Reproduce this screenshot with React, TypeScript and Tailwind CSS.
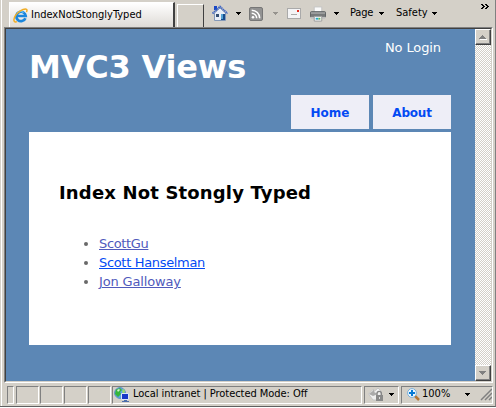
import type { ReactNode } from "react";

const UI = "font-['DejaVu_Sans_Condensed','DejaVu_Sans',sans-serif]";

function Caret({ color = "#000" }: { color?: string }) {
  return (
    <svg width="5" height="3" viewBox="0 0 5 3" shapeRendering="crispEdges" className="shrink-0">
      <path d="M0 0h5v1H4v1H3v1H2V2H1V1H0z" fill={color} />
    </svg>
  );
}

function IeLogo() {
  return (
    <svg width="15" height="15" viewBox="0 0 15 15" className="shrink-0">
      <path d="M12.400 10.200a4.700 4.700 0 1 1 .3-2.200H4" fill="none" stroke="#1a86dc" strokeWidth="2.700" />
      <path d="M4 5.400A4.700 4.700 0 0 1 10.500 4.600" fill="none" stroke="#6fcaf7" strokeWidth="1.200" />
      <path d="M4 13.600C.2 15 .2 11 2.500 7.500 5 4 9.500 1 12.500 1c1.800 0 1.800 1.600.9 3.200" fill="none" stroke="#f0ad25" strokeWidth="1.500" />
    </svg>
  );
}

function HomeIcon() {
  return (
    <svg width="16" height="17" viewBox="0 0 16 17" className="shrink-0">
      <path d="M2 1h3v4H2z" fill="#1947c5" />
      <path d="M2.500 8L8 3l5.500 5v7.500h-11z" fill="#e9eef7" stroke="#8398b8" />
      <path d="M.5 8.500L8 1.500l7.500 7" fill="none" stroke="#4368c4" strokeWidth="1.800" strokeDasharray="1.500 .5" />
      <path d="M9 9h4v6H9z" fill="#174b8c" />
      <path d="M4 9h3v3H4z" fill="#344e72" />
      <path d="M9 9h2v5H9z" fill="#55a3d4" />
    </svg>
  );
}

function FeedIcon() {
  return (
    <svg width="14" height="14" viewBox="0 0 14 14" className="shrink-0">
      <rect x=".5" y=".5" width="13" height="13" rx="1.500" fill="#929292" stroke="#777" />
      <circle cx="4" cy="10.300" r="1.300" fill="#fff" />
      <path d="M2.700 6.300a5 5 0 0 1 5 5M2.700 3.200a8 8 0 0 1 8 8" fill="none" stroke="#fff" strokeWidth="1.500" />
    </svg>
  );
}

function MailIcon() {
  return (
    <svg width="14" height="11" viewBox="0 0 14 11" className="shrink-0">
      <rect x=".5" y=".5" width="13" height="10" fill="#f4f4f6" stroke="#aaa" />
      <path d="M10 2h2v2h-2z" fill="#e32b20" />
      <path d="M4 6.500h6" stroke="#aaa" />
    </svg>
  );
}

function PrinterIcon() {
  return (
    <svg width="16" height="16" viewBox="0 0 17 16" className="shrink-0">
      <path d="M4.500.5h8v6h-8z" fill="#fafafa" stroke="#c4c4c4" />
      <rect x=".5" y="5.500" width="16" height="6" rx="1" fill="#77797a" stroke="#5c6062" />
      <path d="M1 6h15v2H1z" fill="#9a9c9c" />
      <path d="M1 11h15v2H1z" fill="#bfc0c0" />
      <path d="M4.500 10.500h8v5h-8z" fill="#fff" stroke="#999" />
      <path d="M6 12h3v2H6z" fill="#27a4c8" />
      <path d="M9 12h2v2H9z" fill="#65b550" />
    </svg>
  );
}

function ZoneIcon() {
  return (
    <svg width="16" height="16" viewBox="0 0 16 16" className="shrink-0">
      <circle cx="6" cy="6" r="5.400" fill="#5aa5e6" stroke="#5d8fc4" />
      <path d="M2 2.500L6 1l2 2-2 2 1 2-3 3-3-3z" fill="#35b53a" />
      <path d="M9 1.500l2 2.500-1 3-2-2z" fill="#9bdc6b" />
      <path d="M3 3l2-1 1 1-2 2z" fill="#d5f3cf" />
      <path d="M7.500 6.500h7v6h-7z" fill="#1738c8" stroke="#dce4f4" />
      <path d="M10 13h3v1h2v1H8v-1h2z" fill="#4c6dab" />
    </svg>
  );
}

function FilterIcon() {
  return (
    <svg width="16" height="15" viewBox="0 0 16 15" className="shrink-0">
      <path d="M.5 7l5-5v3L10 1l3 3v9H5z" fill="#efefef" stroke="#c4c4c4" />
      <path d="M1 7l5-4v2l4 2-5 2z" fill="#aaa" />
      <path d="M9 8V6.500a2.200 2.200 0 0 1 4.400 0V8" fill="none" stroke="#858585" strokeWidth="1.300" />
      <path d="M8 8h7v6H8z" fill="#898989" />
      <path d="M11 10h1v2h-1z" fill="#ddd" />
    </svg>
  );
}

function ZoomIcon() {
  return (
    <svg width="13" height="13" viewBox="0 0 13 13" className="shrink-0">
      <path d="M7.500 7.500L12 12" stroke="#b77836" strokeWidth="2.500" />
      <circle cx="5" cy="5" r="4.400" fill="#edf8ff" stroke="#7baeda" />
      <path d="M5 2v6M2 5h6" stroke="#087bd5" strokeWidth="2" />
    </svg>
  );
}

function Pane({ className = "", children }: { className?: string; children?: ReactNode }) {
  return (
    <div className={`flex h-[18px] shrink-0 items-center border border-t-[#808080] border-l-[#808080] border-r-white border-b-white ${className}`}>
      {children}
    </div>
  );
}

function ScrollButton({ down = false }: { down?: boolean }) {
  return (
    <div className="flex h-4 w-4 shrink-0 items-center justify-center border border-t-white border-l-white border-r-[#404040] border-b-[#404040] bg-[#d4d0c8] shadow-[inset_-1px_-1px_#808080]">
      <svg width="8" height="5" viewBox="0 0 8 5" shapeRendering="crispEdges">
        {down ? (
          <path d="M0 0h7v1H6v1H5v1H4v1H3V3H2V2H1V1H0z" fill="#808080" />
        ) : (
          <>
            <path d="M1 4h7v1H1z" fill="#fff" />
            <path d="M3 0h1v1h1v1h1v1h1v1H0V3h1V2h1V1h1z" fill="#808080" />
          </>
        )}
      </svg>
    </div>
  );
}

export default function App() {
  return (
    <div className={`h-[408px] w-[496px] overflow-hidden bg-white text-[11px] text-black ${UI}`}>
      <div className="flex h-[407px] border-r border-b border-r-[#808080] border-b-[#606060] bg-[#d4d0c8] pl-px">
        <div className="w-px shrink-0 bg-white" />
        <div className="flex w-[493px] shrink-0 flex-col">
          <div className="flex h-[27px] shrink-0">
            <div className="mt-[2px] ml-[7px] flex h-[25px] w-[166px] items-center border-t border-r-2 border-l border-t-white border-l-white border-r-[#404040] bg-linear-to-b from-white to-[#dedbd6] pl-[3px]">
              <IeLogo />
              <span className="ml-[3px] w-[112px] whitespace-nowrap">IndexNotStonglyTyped</span>
            </div>
            <div className="mt-[4px] ml-[2px] h-[23px] w-[27px] border-t border-r border-l border-t-white border-l-white border-r-[#404040]" />
            <div className="ml-[8px] flex items-center">
              <HomeIcon />
              <span className="ml-[8px]"><Caret /></span>
              <span className="ml-[8px]"><FeedIcon /></span>
              <span className="ml-[10px]"><Caret color="#96938e" /></span>
              <span className="ml-[9px]"><MailIcon /></span>
              <span className="ml-[9px]"><PrinterIcon /></span>
              <span className="ml-[8px]"><Caret /></span>
              <span className="ml-[11px] w-[25px] whitespace-nowrap tracking-[-0.2px]">Page</span>
              <span className="ml-[4px]"><Caret /></span>
              <span className="ml-[12px] w-[33px] whitespace-nowrap">Safety</span>
              <span className="ml-[3px]"><Caret /></span>
            </div>
            <svg className="mt-1 ml-[44px]" width="8" height="5" viewBox="0 0 8 5" shapeRendering="crispEdges">
              <path d="M0 0h2v1h1v1h1v1H3v1H2v1H0V4h1V3h1V2H1V1H0zM4 0h2v1h1v1h1v1H7v1H6v1H4V4h1V3h1V2H5V1H4z" fill="#000" />
            </svg>
          </div>

          <div className="ml-[2px] h-[356px] w-[489px] shrink-0 border border-t-[#808080] border-r-white border-b-white border-l-[#808080]">
            <div className="flex h-[354px] border border-t-[#404040] border-r-[#d4d0c8] border-b-[#d4d0c8] border-l-[#404040]">
              <main className="flex w-[469px] flex-col bg-[#5c87b5] font-['Verdana','DejaVu_Sans',sans-serif]">
                <header className="flex h-[66px] shrink-0 justify-between pr-[34px] pl-[23px] text-white">
                  <h1 className="mt-[18px] w-[218px] text-[32px] leading-[40px] font-bold whitespace-nowrap tracking-[-0.2px]">MVC3 Views</h1>
                  <span className="mt-[10px] text-[13px] leading-[18px] whitespace-nowrap tracking-[-0.1px]">No Login</span>
                </header>
                <nav className="flex h-[34px] shrink-0 gap-1 self-end pr-[24px] text-[12px] font-bold text-[#034af3]">
                  <a className="flex w-[78px] items-center justify-center bg-[#eeeef7] pt-px">Home</a>
                  <a className="flex w-[78px] items-center justify-center bg-[#eeeef7] pt-px tracking-[-0.2px]">About</a>
                </nav>
                <section className="mt-[3px] ml-[23px] h-[213px] w-[422px] bg-white px-[30px] pt-[49px]">
                  <h2 className="text-[18px] leading-[24px] font-bold whitespace-nowrap tracking-[0.16px]">Index Not Stongly Typed</h2>
                  <ul className="mt-[29px] list-disc pl-[40px] text-[13px] leading-[19px] text-[#696969]">
                    <li><a className="tracking-[-0.35px] text-[#505abc] underline">ScottGu</a></li>
                    <li><a className="tracking-[-0.33px] text-[#034af3] underline">Scott Hanselman</a></li>
                    <li><a className="tracking-[-0.15px] text-[#505abc] underline">Jon Galloway</a></li>
                  </ul>
                </section>
              </main>
              <div className="flex w-4 flex-col justify-between bg-[repeating-conic-gradient(#d4d0c8_0_25%,#fff_0_50%)] bg-size-[2px_2px]">
                <ScrollButton />
                <ScrollButton down />
              </div>
            </div>
          </div>

          <footer className="flex h-[23px] shrink-0 items-center pl-[5px]">
            <Pane className="w-[7px]" />
            <Pane className="ml-[2px] w-[23px]" />
            <Pane className="ml-px w-[23px]" />
            <Pane className="ml-px w-[23px]" />
            <Pane className="ml-px w-[23px]" />
            <Pane className="ml-[1px] w-[250px] pl-px">
              <ZoneIcon />
              <span className="ml-[3px] whitespace-nowrap tracking-[-0.05px]">Local intranet | Protected Mode: Off</span>
            </Pane>
            <Pane className="ml-[2px] w-[35px] pl-[3px]">
              <FilterIcon />
              <span className="ml-[5px]"><Caret /></span>
            </Pane>
            <Pane className="ml-[2px] w-[92px] pl-[5px]">
              <ZoomIcon />
              <span className="ml-[2px] w-[30px] whitespace-nowrap">100%</span>
              <span className="ml-[13px]"><Caret /></span>
              <svg className="ml-auto" width="12" height="13" viewBox="0 0 12 13">
                <path d="M1 12L12 1M5 12l7-7M9 12l3-3" stroke="#808080" strokeWidth="1.500" />
              </svg>
            </Pane>
          </footer>
        </div>
      </div>
    </div>
  );
}
